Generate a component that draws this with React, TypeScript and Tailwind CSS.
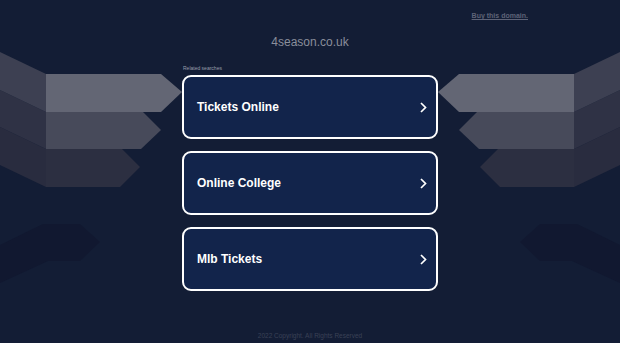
import React from 'react';

const searches = ['Tickets Online', 'Online College', 'Mlb Tickets'];

function SideArrows({ mirrored }: { mirrored?: boolean }) {
  return (
    <g transform={mirrored ? 'translate(620,0) scale(-1,1)' : undefined}>
      {/* dark lower arrow */}
      <polygon points="0,245 43,224 80,224 100,242 80,261 48,261 0,283" fill="#111830" />
      {/* layer 3 */}
      <polygon points="0,127 46,149 46,187 0,165" fill="#292c3f" />
      <polygon points="46,149 122,149 140,167 120,187 46,187" fill="#2c2f41" />
      {/* layer 2 */}
      <polygon points="0,90 46,112 46,149 0,127" fill="#2f3245" />
      <polygon points="46,112 143,112 161,130 141,149 46,149" fill="#474a5a" />
      {/* layer 1 */}
      <polygon points="0,52 46,74 46,112 0,90" fill="#3d4052" />
      <polygon points="46,74 161,74 182,92 161,112 46,112" fill="#636674" />
    </g>
  );
}

function SearchCard({ label }: { label: string }) {
  return (
    <a
      href="#"
      className="flex h-[64px] w-[256px] items-center justify-between rounded-[9px] border-2 border-white bg-[#12244b] pl-[13px] pr-[9px]"
    >
      <span className="text-[12px] font-bold text-white">{label}</span>
      <svg width="7" height="11" viewBox="0 0 7 11" fill="none">
        <path d="M1 1 L5.5 5.5 L1 10" stroke="white" strokeWidth="1.7" />
      </svg>
    </a>
  );
}

export default function App() {
  return (
    <div
      className="relative h-[343px] w-full overflow-hidden bg-[#131d35]"
      style={{ fontFamily: '"Liberation Sans", Arial, sans-serif' }}
    >
      {/* Background arrows */}
      <svg className="absolute inset-0" width="620" height="343" viewBox="0 0 620 343">
        <SideArrows />
        <SideArrows mirrored />
      </svg>

      <div className="relative flex flex-col items-center">
        {/* Header */}
        <div className="flex h-[32px] w-full justify-end pr-[92px] pt-[11px]">
          <a href="#" className="text-[7px] font-bold leading-[9px] text-[#5e6377] underline">
            Buy this domain.
          </a>
        </div>

        <h1 className="text-[12px] leading-[20px] text-[#8a8e9b]">4season.co.uk</h1>

        <div className="mt-[13px] w-[256px]">
          <p className="mb-[3px] pl-[1px] text-[5px] leading-[7px] text-[#9a9dab]">Related searches</p>
          <div className="flex flex-col gap-[12px]">
            {searches.map((s) => (
              <SearchCard key={s} label={s} />
            ))}
          </div>
        </div>

        <p className="mt-[40px] text-[6.5px] leading-[9px] text-[#3a4155]">2022 Copyright. All Rights Reserved</p>
      </div>
    </div>
  );
}
